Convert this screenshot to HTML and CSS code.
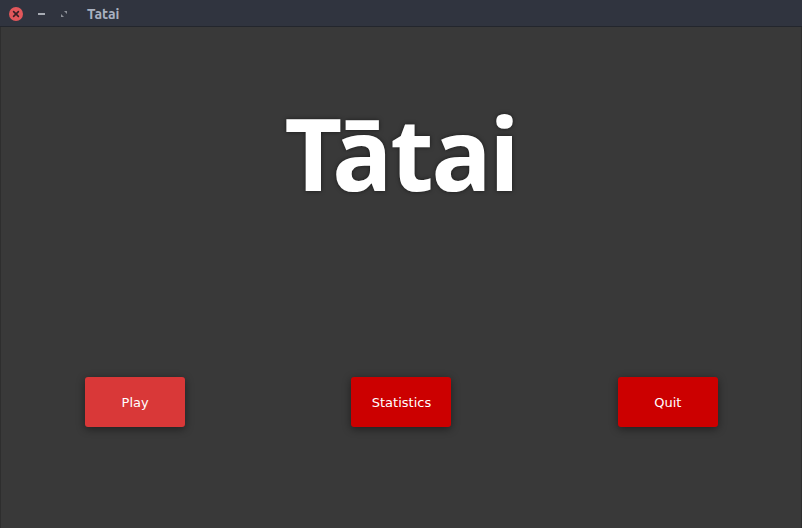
FILE: index.html
```html
<!DOCTYPE html>
<html>
<head>
<meta charset="utf-8">
<link rel="stylesheet" href="styles.css">
</head>
<body>
<div class="window">
  <div class="titlebar">
    <span class="close"><svg width="14" height="14" viewBox="0 0 14 14"><circle cx="7" cy="7" r="7" fill="#e2575b"/><path d="M4.6 4.6L9.4 9.4M9.4 4.6L4.6 9.4" stroke="#3a2026" stroke-width="1.6" stroke-linecap="round"/></svg></span>
    <span class="min"><svg width="10" height="10" viewBox="0 0 10 10"><rect x="1" y="4" width="7" height="2" fill="#a7abb3"/></svg></span>
    <span class="max"><svg width="10" height="10" viewBox="0 0 10 10"><path d="M5 2H8V5Z" fill="#8d9199"/><path d="M2 5V8H5Z" fill="#8d9199"/></svg></span>
    <span class="wtitle">Tatai</span>
  </div>
  <div class="content">
    <h1 class="logo">Tātai</h1>
    <div class="actions">
      <div class="cell"><button class="btn btn-play">Play</button></div>
      <div class="cell"><button class="btn">Statistics</button></div>
      <div class="cell"><button class="btn">Quit</button></div>
    </div>
  </div>
</div>
</body>
</html>
```
FILE: styles.css
```css
html, body {
  margin: 0;
  padding: 0;
  width: 802px;
  height: 528px;
  overflow: hidden;
  background: #393939;
}
.window {
  display: flex;
  flex-direction: column;
  height: 528px;
}
.titlebar {
  height: 26px;
  background: #30343f;
  border-bottom: 1px solid #23262d;
  display: flex;
  align-items: center;
  padding-left: 9px;
  font-family: "Ubuntu", "DejaVu Sans", sans-serif;
}
.titlebar span { display: flex; align-items: center; }
.close { margin-right: 14px; margin-top: 1px; }
.min { margin-right: 12px; margin-top: 1px; }
.max { margin-right: 18px; margin-top: 1px; }
.wtitle {
  color: #a9b1c1;
  font-weight: bold;
  font-size: 14px;
  margin-top: 1px;
}
.content {
  flex: 1;
  background: #393939;
  border-left: 1px solid #2e2e2e;
  border-right: 1px solid #2e2e2e;
  display: flex;
  flex-direction: column;
}
.logo {
  margin: 65px 0 0 0;
  text-align: center;
  font-family: "Noto Sans", "Open Sans", sans-serif;
  font-weight: bold;
  font-size: 100px;
  line-height: 120px;
  color: #ffffff;
  letter-spacing: -2px;
  text-shadow: 0 0 4px rgba(0,0,0,0.55);
}
.actions {
  margin-top: 165px;
  padding-left: 1px;
  display: grid;
  grid-template-columns: 1fr 1fr 1fr;
}
.cell {
  display: flex;
  justify-content: center;
}
.btn {
  width: 100px;
  height: 50px;
  border: none;
  border-radius: 3px;
  background: #cc0000;
  color: #ffffff;
  font-family: "DejaVu Sans", sans-serif;
  font-size: 13px;
  box-shadow: 0 2px 8px rgba(0,0,0,0.45);
  padding: 0;
}
.btn-play {
  background: #d93838;
}
```
